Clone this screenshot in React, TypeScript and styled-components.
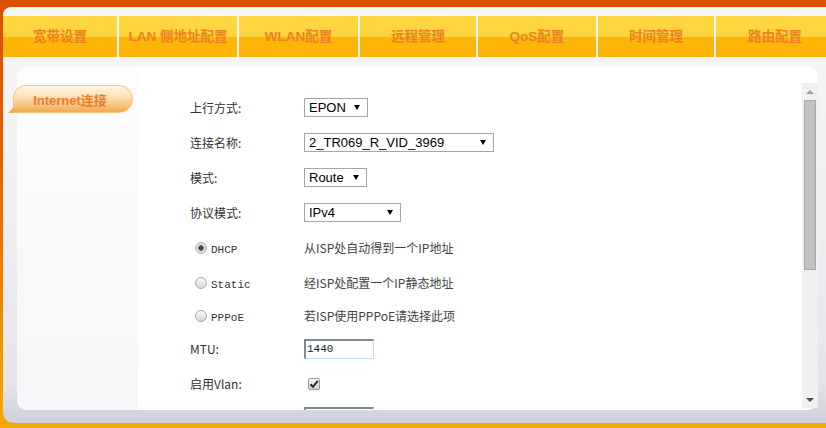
import styled, { createGlobalStyle } from 'styled-components';

const GlobalStyle = createGlobalStyle`
  html, body { margin: 0; padding: 0; }
  body { font-family: "Noto Sans CJK SC", "Liberation Sans", sans-serif; }
`;

const navTabs = [
  { label: '宽带设置', w: 114 },
  { label: 'LAN 侧地址配置', w: 118 },
  { label: 'WLAN配置', w: 119 },
  { label: '远程管理', w: 116 },
  { label: 'QoS配置', w: 118 },
  { label: '时间管理', w: 116 },
  { label: '路由配置', w: 118 },
];

const radios = [
  { name: 'DHCP', desc: '从ISP处自动得到一个IP地址', on: true, h: 35 },
  { name: 'Static', desc: '经ISP处配置一个IP静态地址', on: false, h: 35 },
  { name: 'PPPoE', desc: '若ISP使用PPPoE请选择此项', on: false, h: 31 },
];

function Select({ value, width }: { value: string; width: number }) {
  return (
    <SelectBox $w={width}>
      <span>{value}</span>
      <Caret />
    </SelectBox>
  );
}

export default function App() {
  return (
    <>
      <GlobalStyle />
      <Page>
        <Frame>
          <TabBar>
            {navTabs.map((t) => (
              <NavTab key={t.label} $w={t.w}>
                {t.label}
              </NavTab>
            ))}
          </TabBar>
          <Panel>
            <Sidebar>
              <SideTab>Internet连接</SideTab>
            </Sidebar>
            <Main>
              <Row>
                <Label>上行方式:</Label>
                <Select value="EPON" width={64} />
              </Row>
              <Row>
                <Label>连接名称:</Label>
                <Select value="2_TR069_R_VID_3969" width={190} />
              </Row>
              <Row>
                <Label>模式:</Label>
                <Select value="Route" width={63} />
              </Row>
              <Row>
                <Label>协议模式:</Label>
                <Select value="IPv4" width={97} />
              </Row>
              {radios.map((r) => (
                <Row key={r.name} $h={r.h}>
                  <RadioLabel>
                    <Radio $on={r.on} />
                    <Mono>{r.name}</Mono>
                  </RadioLabel>
                  <Desc>{r.desc}</Desc>
                </Row>
              ))}
              <Row>
                <Label>MTU:</Label>
                <TextInput defaultValue="1440" />
              </Row>
              <Row>
                <Label>启用Vlan:</Label>
                <Checkbox>
                  <svg width="10" height="10" viewBox="0 0 10 10">
                    <path d="M1.5 5.2 L4 7.8 L8.8 1.8" fill="none" stroke="#2a2a2a" strokeWidth="2" />
                  </svg>
                </Checkbox>
              </Row>
              <Row $h={30} $top>
                <Label />
                <TextInput defaultValue="" />
              </Row>
            </Main>
            <Scrollbar>
              <ScrollArrow $up />
              <Thumb />
              <ScrollArrow />
            </Scrollbar>
          </Panel>
        </Frame>
      </Page>
    </>
  );
}

const Page = styled.div`
  width: 826px;
  height: 428px;
  box-sizing: border-box;
  padding: 7px 0 5px 3px;
  background: linear-gradient(180deg, #d95100 0%, #e06000 35%, #ee8c00 75%, #f6a900 100%);
  overflow: hidden;
`;

const Frame = styled.div`
  height: 100%;
  box-sizing: border-box;
  display: flex;
  flex-direction: column;
  padding: 9px 0 13px 0;
  border-radius: 8px 0 0 10px;
  background: linear-gradient(180deg, #f7f7f8 0%, #eeeef1 55%, #e4e4ea 90%, #d0d0da 100%);
`;

const TabBar = styled.div`
  display: flex;
  gap: 2px;
  height: 41px;
  flex: 0 0 41px;
  overflow: hidden;
`;

const NavTab = styled.div<{ $w: number }>`
  flex: 0 0 ${(p) => p.$w}px;
  display: flex;
  align-items: center;
  justify-content: center;
  padding-bottom: 3px;
  box-sizing: border-box;
  background: linear-gradient(180deg, #fed842 0%, #fdd33a 50%, #fdb509 51%, #fdb406 100%);
  color: #ec8120;
  font: bold 13.5px "Liberation Sans", "Noto Sans CJK SC", sans-serif;
  white-space: nowrap;
`;

const Panel = styled.div`
  flex: 1;
  display: flex;
  margin: 10px 8px 0 14px;
  background: #fff;
  border-radius: 10px;
  min-height: 0;
`;

const Sidebar = styled.div`
  flex: 0 0 121px;
  border-radius: 10px 0 0 10px;
  background: linear-gradient(180deg, #fdfdfd 0%, #f6f6f8 100%);
  padding-top: 18px;
`;

const SideTab = styled.div`
  position: relative;
  margin-left: -4px;
  width: 120px;
  height: 28px;
  box-sizing: border-box;
  border: 1px solid #f1c57c;
  border-radius: 13px 14px 14px 0;
  background: linear-gradient(180deg, #fff6e2 0%, #fbe3b8 40%, #f6c47c 75%, #f1a94c 100%);
  display: flex;
  align-items: center;
  justify-content: center;
  padding-right: 6px;
  color: #f07a2a;
  font: bold 13px "Liberation Sans", "Noto Sans CJK SC", sans-serif;
  &::before {
    content: '';
    position: absolute;
    left: -6px;
    bottom: -1px;
    border-left: 6px solid transparent;
    border-bottom: 6px solid #f1a94c;
  }
`;

const Main = styled.div`
  flex: 1;
  overflow: hidden;
  padding: 23px 0 0 52px;
  display: flex;
  flex-direction: column;
`;

const Row = styled.div<{ $h?: number; $top?: boolean }>`
  flex: 0 0 ${(p) => p.$h ?? 35}px;
  display: grid;
  grid-template-columns: 114px auto;
  align-items: ${(p) => (p.$top ? 'start' : 'center')};
  padding-top: ${(p) => (p.$top ? 6 : 0)}px;
  box-sizing: border-box;
`;

const Label = styled.span`
  font: 12px "Noto Sans CJK SC", sans-serif;
  color: #333;
`;

const SelectBox = styled.div<{ $w: number }>`
  width: ${(p) => p.$w}px;
  height: 19px;
  box-sizing: border-box;
  border: 1px solid #a6a6a6;
  background: #fff;
  display: flex;
  align-items: center;
  justify-content: space-between;
  padding: 0 7px 0 4px;
  font: 13px "Liberation Sans", Arial, sans-serif;
  color: #000;
`;

const Caret = styled.span`
  width: 0;
  height: 0;
  border-left: 3px solid transparent;
  border-right: 3px solid transparent;
  border-top: 5px solid #000;
`;

const RadioLabel = styled.span`
  display: flex;
  align-items: center;
  gap: 4px;
  padding-left: 5px;
`;

const Radio = styled.span<{ $on?: boolean }>`
  width: 12px;
  height: 12px;
  box-sizing: border-box;
  border-radius: 50%;
  border: 1px solid #a9a9a9;
  background: ${(p) =>
    p.$on
      ? 'radial-gradient(circle, #4a4a4a 0 2.4px, #dcdcdc 3px, #f4f4f4 100%)'
      : 'linear-gradient(180deg, #fafafa 0%, #d6d6d6 100%)'};
`;

const Mono = styled.span`
  font: 11px "Liberation Mono", monospace;
  color: #333;
  margin-top: 4px;
`;

const Desc = styled.span`
  font: 12px "Noto Sans CJK SC", sans-serif;
  color: #444;
`;

const TextInput = styled.input`
  width: 70px;
  height: 20px;
  box-sizing: border-box;
  border-style: solid;
  border-width: 2px 1px 1px 2px;
  border-color: #7d8a99 #c5daf0 #c5daf0 #7d8a99;
  padding: 0 1px;
  font: 11px "Liberation Mono", monospace;
  color: #222;
  outline: none;
`;

const Checkbox = styled.span`
  width: 12px;
  height: 12px;
  margin-left: 4px;
  box-sizing: border-box;
  border: 1px solid #999;
  border-radius: 2px;
  background: linear-gradient(180deg, #f6f6f6 0%, #d4d4d4 100%);
  display: flex;
  align-items: center;
  justify-content: center;
`;

const Scrollbar = styled.div`
  flex: 0 0 16px;
  margin: 16px 0 2px 0;
  background: #f0f0f0;
  display: flex;
  flex-direction: column;
  align-items: center;
  justify-content: space-between;
`;

const ScrollArrow = styled.span<{ $up?: boolean }>`
  flex: 0 0 17px;
  width: 0;
  height: 0;
  box-sizing: border-box;
  display: flex;
  align-items: center;
  justify-content: center;
  &::after {
    content: '';
    border-left: 4px solid transparent;
    border-right: 4px solid transparent;
    ${(p) => (p.$up ? 'border-bottom: 4px solid #a3a3a3;' : 'border-top: 4px solid #505050;')}
  }
`;

const Thumb = styled.div`
  width: 12px;
  height: 170px;
  box-sizing: border-box;
  background: #c1c1c1;
  border: 1px solid #a9a9a9;
  margin-bottom: auto;
`;
